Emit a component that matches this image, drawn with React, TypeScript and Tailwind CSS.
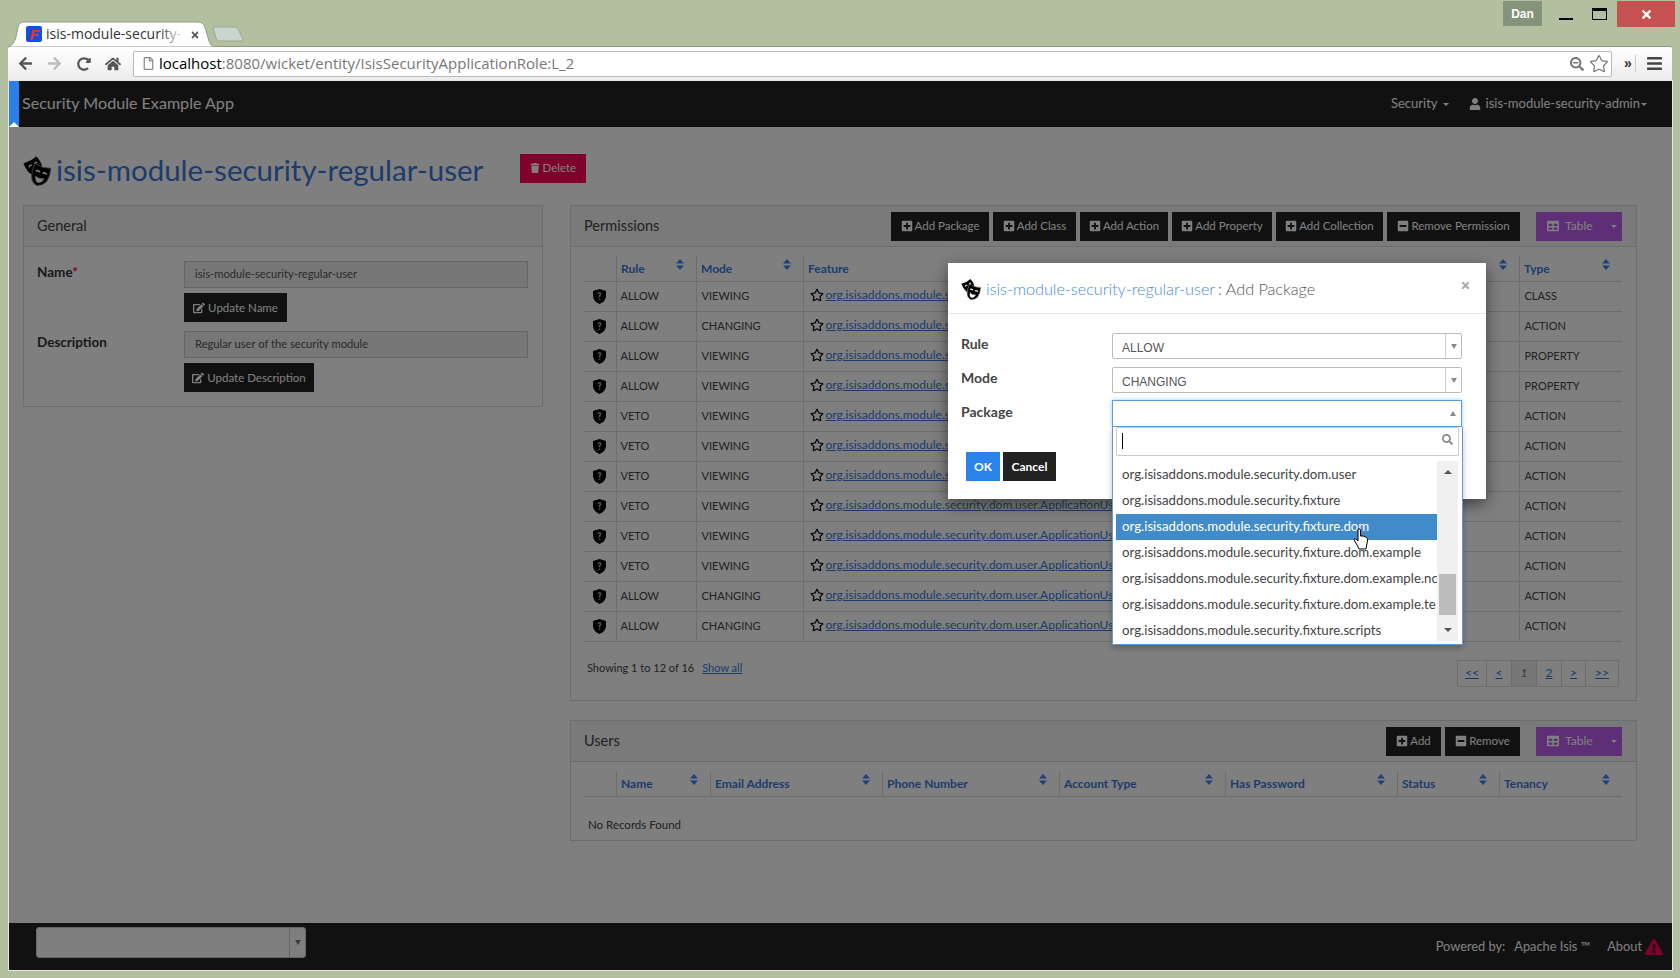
import {
  FaArrowLeft,
  FaArrowRight,
  FaBars,
  FaEdit,
  FaExclamationTriangle,
  FaHome,
  FaMinusSquare,
  FaPlusSquare,
  FaRedoAlt,
  FaRegFile,
  FaRegStar,
  FaSearch,
  FaSearchMinus,
  FaTable,
  FaTimes,
  FaTrash,
  FaUser,
} from "react-icons/fa";
import { Star } from "lucide-react";

const sans = "font-['Lato','Noto_Sans',sans-serif]";

const permissionRows = [
  ["ALLOW", "VIEWING", "CLASS"],
  ["ALLOW", "CHANGING", "ACTION"],
  ["ALLOW", "VIEWING", "PROPERTY"],
  ["ALLOW", "VIEWING", "PROPERTY"],
  ["VETO", "VIEWING", "ACTION"],
  ["VETO", "VIEWING", "ACTION"],
  ["VETO", "VIEWING", "ACTION"],
  ["VETO", "VIEWING", "ACTION"],
  ["VETO", "VIEWING", "ACTION"],
  ["VETO", "VIEWING", "ACTION"],
  ["ALLOW", "CHANGING", "ACTION"],
  ["ALLOW", "CHANGING", "ACTION"],
];

const packageOptions = [
  "org.isisaddons.module.security.dom.user",
  "org.isisaddons.module.security.fixture",
  "org.isisaddons.module.security.fixture.dom",
  "org.isisaddons.module.security.fixture.dom.example",
  "org.isisaddons.module.security.fixture.dom.example.nc",
  "org.isisaddons.module.security.fixture.dom.example.te",
  "org.isisaddons.module.security.fixture.scripts",
];

// two tilted comedy/tragedy masks
function Masks({ size }: { size: number }) {
  return (
    <svg width={size} height={size} viewBox="0 0 30 30" className="shrink-0">
      <g transform="translate(0 7) rotate(-28)">
        <path d="M0 1 Q7 3 14 1 Q16 8 14 13 Q11 18 7 19 Q3 18 1 13 Q-1 8 0 1Z" fill="#000" />
        <path d="M3 7 Q5 5 6 7 M9 7 Q11 5 12 7" stroke="#fff" strokeWidth="1.4" fill="none" />
        <path d="M4 14 Q7 10 11 14 Q7 12.5 4 14Z" fill="#fff" />
      </g>
      <g transform="translate(12 7) rotate(18)">
        <path d="M0 1 Q8 4 16 1 Q18 9 16 15 Q13 20 8 21 Q3 20 1 15 Q-1 9 0 1Z" fill="#000" stroke="#808080" strokeWidth="0.8" />
        <path d="M3 8 Q5 6 7 8 M10 8 Q12 6 14 8" stroke="#fff" strokeWidth="1.5" fill="none" />
        <path d="M4 12 Q8 15 13 12 Q12 18 8 18 Q5 18 4 12Z" fill="#fff" />
      </g>
    </svg>
  );
}

function Shield() {
  return (
    <svg width="13" height="15" viewBox="0 0 13 15" className="mx-auto">
      <path d="M6.5 0 L13 2 L13 7 Q13 12 6.5 15 Q0 12 0 7 L0 2Z" fill="#000" />
      <path d="M4.5 5 Q4.7 3 6.5 3 Q8.6 3 8.6 5 Q8.6 6.2 7.3 6.9 L7.3 8.4 L5.7 8.4 L5.7 6.2 Q7 5.8 7 5 Q6.5 4.3 5.9 5.3Z M5.7 9.4 h1.6 v1.6 h-1.6z" fill="#999" />
    </svg>
  );
}

function SortIcon() {
  return (
    <svg width="8" height="11" viewBox="0 0 8 11" className="absolute right-[12px] top-[3px]">
      <path d="M4 0 L8 4.5 L0 4.5Z M4 11 L0 6.5 L8 6.5Z" fill="#3d84f0" />
    </svg>
  );
}

function ActionButton({ label, kind, width }: { label: string; kind: "plus" | "minus"; width: string }) {
  return (
    <div className={`flex h-[29px] items-center justify-center gap-[2px] bg-[#222] text-[11.5px] text-white ${width}`}>
      {kind === "plus" ? <FaPlusSquare size={12} /> : <FaMinusSquare size={12} />}
      <span>{label}</span>
    </div>
  );
}

function TableToggle() {
  return (
    <div className="ml-[12px] flex h-[29px] w-[86px] items-center bg-[#bd5fef] pl-[11px] text-[12px] text-white">
      <FaTable size={12} />
      <span className="ml-[6px]">Table</span>
      <span className="ml-[18px] h-0 w-0 border-x-[3px] border-t-[3px] border-x-transparent border-t-white" />
    </div>
  );
}

function HeaderCell({ label, width }: { label: string; width: string }) {
  return (
    <th className={`relative border-l border-[#ddd] pl-[4.5px] pt-[2px] text-left text-[12px] font-bold text-[#3a78d8] ${width}`}>
      {label}
      <SortIcon />
    </th>
  );
}

function PermissionsTable() {
  return (
    <table className="w-[1038px] table-fixed border-collapse text-[11px] text-[#444]">
      <thead>
        <tr className="h-[25px] border-b border-[#ddd]">
          <th className="w-[32px]" />
          <HeaderCell label="Rule" width="w-[80px]" />
          <HeaderCell label="Mode" width="w-[107px]" />
          <HeaderCell label="Feature" width="w-[716px]" />
          <HeaderCell label="Type" width="w-[103px]" />
        </tr>
      </thead>
      <tbody>
        {permissionRows.map((row, i) => (
          <tr key={i} className="h-[30px] border-b border-[#ddd]">
            <td><Shield /></td>
            <td className="border-l border-[#ddd] pl-[4px]">{row[0]}</td>
            <td className="border-l border-[#ddd] pl-[5px]">{row[1]}</td>
            <td className="overflow-hidden whitespace-nowrap border-l border-[#ddd] pl-[6px]">
              <span className="inline-flex items-center gap-[2px]">
                <FaRegStar size={14} className="text-black" />
                <span className="text-[12px] text-[#3a78d8] underline">org.isisaddons.module.security.dom.user.ApplicationUser#updateName</span>
              </span>
            </td>
            <td className="border-l border-[#ddd] pl-[5px]">{row[2]}</td>
          </tr>
        ))}
      </tbody>
    </table>
  );
}

function UsersTable() {
  return (
    <table className="w-[1038px] table-fixed border-collapse">
      <thead>
        <tr className="h-[25px] border-b border-[#ddd]">
          <th className="w-[32px]" />
          <HeaderCell label="Name" width="w-[94px]" />
          <HeaderCell label="Email Address" width="w-[172px]" />
          <HeaderCell label="Phone Number" width="w-[177px]" />
          <HeaderCell label="Account Type" width="w-[166px]" />
          <HeaderCell label="Has Password" width="w-[172px]" />
          <HeaderCell label="Status" width="w-[102px]" />
          <HeaderCell label="Tenancy" width="w-[123px]" />
        </tr>
      </thead>
    </table>
  );
}

function Panel({ title, actions, children, className }: { title: string; actions?: React.ReactNode; children: React.ReactNode; className?: string }) {
  return (
    <section className={`border border-[#ddd] ${className ?? ""}`}>
      <div className="flex h-[41px] items-center justify-between border-b border-[#ddd] bg-[#f5f5f5] pl-[13px] pr-[14px]">
        <span className="text-[14.5px] text-[#444]">{title}</span>
        {actions ? <div className="flex items-center gap-[4px]">{actions}</div> : null}
      </div>
      {children}
    </section>
  );
}

function UpdateField({ label, required, value, button, buttonWidth }: { label: string; required?: boolean; value: string; button: string; buttonWidth: string }) {
  return (
    <div className="flex">
      <div className="w-[147px] pt-px text-[13.5px] font-bold text-[#333]">
        {label}
        {required ? <span className="text-[#e01040]">*</span> : null}
      </div>
      <div className="w-[344px]">
        <div className="flex h-[27px] items-center border border-[#ccc] bg-[#eee] pl-[10px] text-[11.2px] text-[#555]">{value}</div>
        <div className={`mt-[5px] flex h-[29px] items-center justify-center gap-[3px] bg-[#222] text-[11.5px] text-white ${buttonWidth}`}>
          <FaEdit size={12} />
          {button}
        </div>
      </div>
    </div>
  );
}

function SelectBox({ value }: { value: string }) {
  return (
    <div className="flex h-[26px] w-[350px] items-center rounded-[2px] border border-[#bbb] bg-white text-[12px] text-[#555] font-['Liberation_Sans',sans-serif]">
      <span className="flex-1 pl-[9px] pt-[3px]">{value}</span>
      <span className="flex h-full w-[16px] items-center justify-center border-l border-[#ccc]">
        <span className="h-0 w-0 border-x-[3px] border-t-[5px] border-x-transparent border-t-[#888]" />
      </span>
    </div>
  );
}

function AddPackageModal() {
  return (
    <div className="absolute left-[939px] top-[182px] h-[236px] w-[538px] bg-white shadow-[0_5px_15px_rgba(0,0,0,0.5)]">
      <div className="flex h-[51px] items-center border-b border-[#e5e5e5] pl-[13px] pr-[15px] pt-[2px]">
        <Masks size={22} />
        <span className="ml-[3px] text-[16.2px] font-light text-[#428be8]">isis-module-security-regular-user</span>
        <span className="ml-[3px] text-[16.2px] font-light text-[#555]">: Add Package</span>
        <FaTimes size={11} className="mb-[8px] ml-auto text-[#aaa]" />
      </div>
      <div className="relative h-[184px] pl-[13px] pt-[19px]">
        <div className="mb-[8px] flex h-[26px]">
          <div className="w-[151px] text-[14px] font-bold text-[#444]">Rule</div>
          <SelectBox value="ALLOW" />
        </div>
        <div className="mb-[7px] flex h-[26px]">
          <div className="w-[151px] text-[14px] font-bold text-[#444]">Mode</div>
          <SelectBox value="CHANGING" />
        </div>
        <div className="flex h-[27px]">
          <div className="w-[151px] pt-px text-[14px] font-bold text-[#444]">Package</div>
          <div className="flex h-[27px] w-[350px] items-center justify-end border border-[#5b9dd9] bg-white pr-[5px] shadow-[0_0_4px_rgba(82,168,236,0.6)]">
            <span className="h-0 w-0 border-x-[3px] border-b-[5px] border-x-transparent border-b-[#888]" />
          </div>
        </div>
        <div className="ml-[5px] mt-[25px] flex gap-[3px] text-[12px] font-bold text-white">
          <div className="flex h-[29px] w-[34px] items-center justify-center bg-[#2a84e8]">OK</div>
          <div className="flex h-[29px] w-[53px] items-center justify-center bg-[#222]">Cancel</div>
        </div>
      </div>
    </div>
  );
}

function PackageDropdown() {
  return (
    <div className="absolute left-[1103px] top-[346px] h-[218px] w-[351px] border border-t-0 border-[#5b9dd9] bg-white shadow-[0_3px_6px_rgba(0,0,0,0.25)]">
      <div className="mx-[3px] flex h-[29px] items-center justify-between rounded-[2px] border border-[#ccc] pb-[2px] pl-[5px] pr-[5px]">
        <span className="h-[16px] w-px bg-black" />
        <FaSearch size={11} className="mb-[3px] text-[#888]" />
      </div>
      <div className="ml-[3px] mt-[5px] flex h-[180px]">
        <ul className="w-[321px] pt-px text-[13.25px] text-[#444]">
          {packageOptions.map((option, i) => (
            <li key={option} className={`relative flex h-[26px] items-center overflow-hidden whitespace-nowrap pl-[6px] ${i === 2 ? "bg-[#428bca] text-white" : ""}`}>
              {option}
            </li>
          ))}
        </ul>
        <div className="flex w-[21px] flex-col items-center bg-[#f0f0f0] py-[9px]">
          <span className="h-0 w-0 border-x-[4px] border-b-[4px] border-x-transparent border-b-[#555]" />
          <span className="mt-[100px] h-[41px] w-[17px] shrink-0 bg-[#bcbcbc]" />
          <span className="mt-auto h-0 w-0 border-x-[4px] border-t-[4px] border-x-transparent border-t-[#555]" />
        </div>
      </div>
      <svg width="16" height="22" viewBox="0 0 16 22" className="absolute left-[240px] top-[101px]">
        <path d="M5 1 Q7 0 7.5 2 L7.5 8 L10 8 L13 9 Q15 10 14.5 13 L13.5 18 L13 21 L6 21 L4 17 L1 12 Q1 10 3 11 L5 13Z" fill="#fff" stroke="#000" strokeWidth="1" />
      </svg>
    </div>
  );
}

function Pagination() {
  const cells = [
    { label: "<<", w: "w-[29px]" },
    { label: "<", w: "w-[25px]" },
    { label: "1", w: "w-[25px]", current: true },
    { label: "2", w: "w-[25px]" },
    { label: ">", w: "w-[24px]" },
    { label: ">>", w: "w-[32px]" },
  ];
  return (
    <div className="flex h-[27px] border border-[#ddd] text-[12px] text-[#3a78d8]">
      {cells.map((cell) => (
        <span
          key={cell.label}
          className={`flex items-center justify-center border-r border-[#ddd] last:border-r-0 ${cell.w} ${cell.current ? "bg-[#eee] italic text-[#777]" : "underline"}`}
        >
          {cell.label}
        </span>
      ))}
    </div>
  );
}

export default function App() {
  return (
    <div className={`flex h-[978px] w-[1680px] flex-col overflow-hidden bg-[#b2c0a0] ${sans}`}>
      <div className="relative z-10 h-[46px] shrink-0">
        <svg width="206" height="26" viewBox="0 0 206 26" className="absolute left-[8px] top-[21px]">
          <path d="M0 26 Q6 24 8 16 L10 6 Q11 1 16 1 L190 1 Q195 1 197 6 L201 20 Q202 24 206 26Z" fill="#fff" stroke="#8f9c85" />
        </svg>
        <svg width="32" height="16" viewBox="0 0 32 16" className="absolute left-[212px] top-[26px]">
          <path d="M1 1 L23 1 Q25 1 26 3 L31 13 Q31 15 29 15 L7 15 Q5 15 4 12Z" fill="#cbd5d0" stroke="#9aa893" />
        </svg>
        <div className="absolute left-[26px] top-[26px] flex h-[16px] w-[16px] items-center justify-center rounded-[2px] bg-[#1450e0] font-['Liberation_Sans',sans-serif] text-[15px] font-bold italic leading-none text-[#f0301a]">F</div>
        <span className="absolute left-[46px] top-[23px] whitespace-nowrap font-['Open_Sans',sans-serif] text-[14px] text-[#333]">isis-module-security-</span>
        <div className="absolute left-[160px] top-[24px] h-[20px] w-[24px] bg-gradient-to-r from-transparent to-white" />
        <FaTimes size={10} className="absolute left-[190px] top-[30px] text-[#555]" />
        <div className="absolute left-[1503px] top-px flex h-[25px] w-[39px] items-center justify-center bg-[#84937a] font-['Liberation_Sans',sans-serif] text-[12px] font-bold text-white">Dan</div>
        <div className="absolute left-[1559px] top-[18px] h-[2px] w-[14px] bg-black" />
        <div className="absolute left-[1592px] top-[8px] h-[12px] w-[15px] border border-t-[3px] border-black" />
        <div className="absolute left-[1617px] top-px flex h-[26px] w-[58px] items-center justify-center bg-[#c75050]">
          <FaTimes size={13} className="text-white" />
        </div>
      </div>

      <div className="ml-[8px] mr-[8px] flex h-[35px] shrink-0 items-center rounded-t-[2px] border-t border-[#8f9c85] bg-gradient-to-b from-white to-[#ececec] pb-px">
        <FaArrowLeft size={15} className="ml-[10px] text-[#555]" />
        <FaArrowRight size={15} className="ml-[14px] text-[#bbb]" />
        <FaRedoAlt size={14} className="ml-[15px] text-[#555]" />
        <FaHome size={16} className="ml-[14px] text-[#555]" />
        <div className="ml-[12px] flex h-[26px] w-[1479px] items-center rounded-[2px] border border-[#bbb] bg-white pl-[8px] pr-[2px] font-['Open_Sans',sans-serif] text-[15px]">
          <FaRegFile size={13} className="text-[#888]" />
          <span className="ml-[4px] text-black">localhost</span>
          <span className="text-[#777]">:8080/wicket/entity/IsisSecurityApplicationRole:L_2</span>
          <FaSearchMinus size={14} className="ml-auto text-[#777]" />
          <Star size={20} strokeWidth={1.5} className="ml-[5px] text-[#777]" />
        </div>
        <span className="ml-[12px] font-['Liberation_Sans',sans-serif] text-[14px] font-bold text-[#333]">»</span>
        <span className="ml-[3px] h-[17px] w-px bg-[#ccc]" />
        <FaBars size={17} className="ml-[10px] text-[#444]" />
      </div>

      <div className="relative ml-[9px] mr-[8px] flex h-[889px] shrink-0 flex-col bg-white outline outline-1 outline-[#e8e8e8]">
        <header className="flex h-[46px] shrink-0 items-center justify-between bg-[#222] pl-[13px] pr-[25px] text-white">
          <span className="mb-[2px] text-[16.1px]">Security Module Example App</span>
          <div className="flex items-center text-[13px]">
            <span>Security</span>
            <span className="ml-[5px] h-0 w-0 border-x-[3px] border-t-[3px] border-x-transparent border-t-white" />
            <FaUser size={12} className="ml-[20px] mr-[5px]" />
            <span>isis-module-security-admin</span>
            <span className="ml-px h-0 w-0 border-x-[3px] border-t-[3px] border-x-transparent border-t-white" />
          </div>
        </header>

        <main className="flex-1 pl-[14px] pr-[34px]">
          <div className="flex h-[78px] items-center pt-[8px]">
            <Masks size={31} />
            <span className="ml-[2px] text-[29.5px] text-[#3a78d8]">isis-module-security-regular-user</span>
            <div className="mb-[4px] ml-[37px] flex h-[29px] w-[66px] items-center justify-center gap-[2px] bg-[#ff0055] text-[11.5px] text-white">
              <FaTrash size={10} />
              Delete
            </div>
          </div>

          <div className="flex items-start gap-[27px]">
            <Panel title="General" className="h-[202px] w-[520px]">
              <div className="flex flex-col gap-[9px] px-[13px] pt-[14px]">
                <UpdateField label="Name" required value="isis-module-security-regular-user" button="Update Name" buttonWidth="w-[103px]" />
                <UpdateField label="Description" value="Regular user of the security module" button="Update Description" buttonWidth="w-[130px]" />
              </div>
            </Panel>

            <div className="flex w-[1067px] flex-col gap-[19px]">
              <Panel
                title="Permissions"
                className="h-[496px]"
                actions={
                  <>
                    <ActionButton label="Add Package" kind="plus" width="w-[98px]" />
                    <ActionButton label="Add Class" kind="plus" width="w-[83px]" />
                    <ActionButton label="Add Action" kind="plus" width="w-[88px]" />
                    <ActionButton label="Add Property" kind="plus" width="w-[100px]" />
                    <ActionButton label="Add Collection" kind="plus" width="w-[107px]" />
                    <ActionButton label="Remove Permission" kind="minus" width="w-[133px]" />
                    <TableToggle />
                  </>
                }
              >
                <div className="pl-[13px] pt-[9px]">
                  <PermissionsTable />
                  <div className="mt-[18px] flex items-center justify-between pl-[3px] pr-[17px] text-[11px] text-[#444]">
                    <span className="mb-[10px]">
                      Showing 1 to 12 of 16
                      <span className="ml-[8px] text-[#3a78d8] underline">Show all</span>
                    </span>
                    <Pagination />
                  </div>
                </div>
              </Panel>

              <Panel
                title="Users"
                className="h-[121px]"
                actions={
                  <>
                    <ActionButton label="Add" kind="plus" width="w-[55px]" />
                    <ActionButton label="Remove" kind="minus" width="w-[75px]" />
                    <TableToggle />
                  </>
                }
              >
                <div className="pl-[13px] pt-[9px]">
                  <UsersTable />
                  <p className="mt-[19px] pl-[4px] text-[11.5px] text-[#444]">No Records Found</p>
                </div>
              </Panel>
            </div>
          </div>
        </main>

        <footer className="flex h-[47px] shrink-0 items-center justify-between bg-[#222] pl-[27px] pr-[9px] text-[12.8px] text-white">
          <div className="mb-[8px] flex h-[31px] w-[270px] items-center justify-end rounded-[3px] border border-[#ccc] bg-white">
            <span className="flex h-full w-[16px] items-center justify-center border-l border-[#ccc]">
              <span className="h-0 w-0 border-x-[3px] border-t-[5px] border-x-transparent border-t-[#777]" />
            </span>
          </div>
          <div className="flex items-center">
            <span>Powered by:</span>
            <span className="ml-[9px]">Apache Isis ™</span>
            <span className="ml-[17px]">About</span>
            <FaExclamationTriangle size={18} className="ml-[3px] text-[#ff0055]" />
          </div>
        </footer>

        <div className="absolute inset-0 bg-black/50" />
        <div className="absolute left-0 top-0 flex h-[46px] w-[10px] items-end justify-center bg-[#2a80e8]">
          <span className="h-0 w-0 border-x-[5px] border-b-[5px] border-x-transparent border-b-white" />
        </div>
        <AddPackageModal />
        <PackageDropdown />
      </div>
    </div>
  );
}
